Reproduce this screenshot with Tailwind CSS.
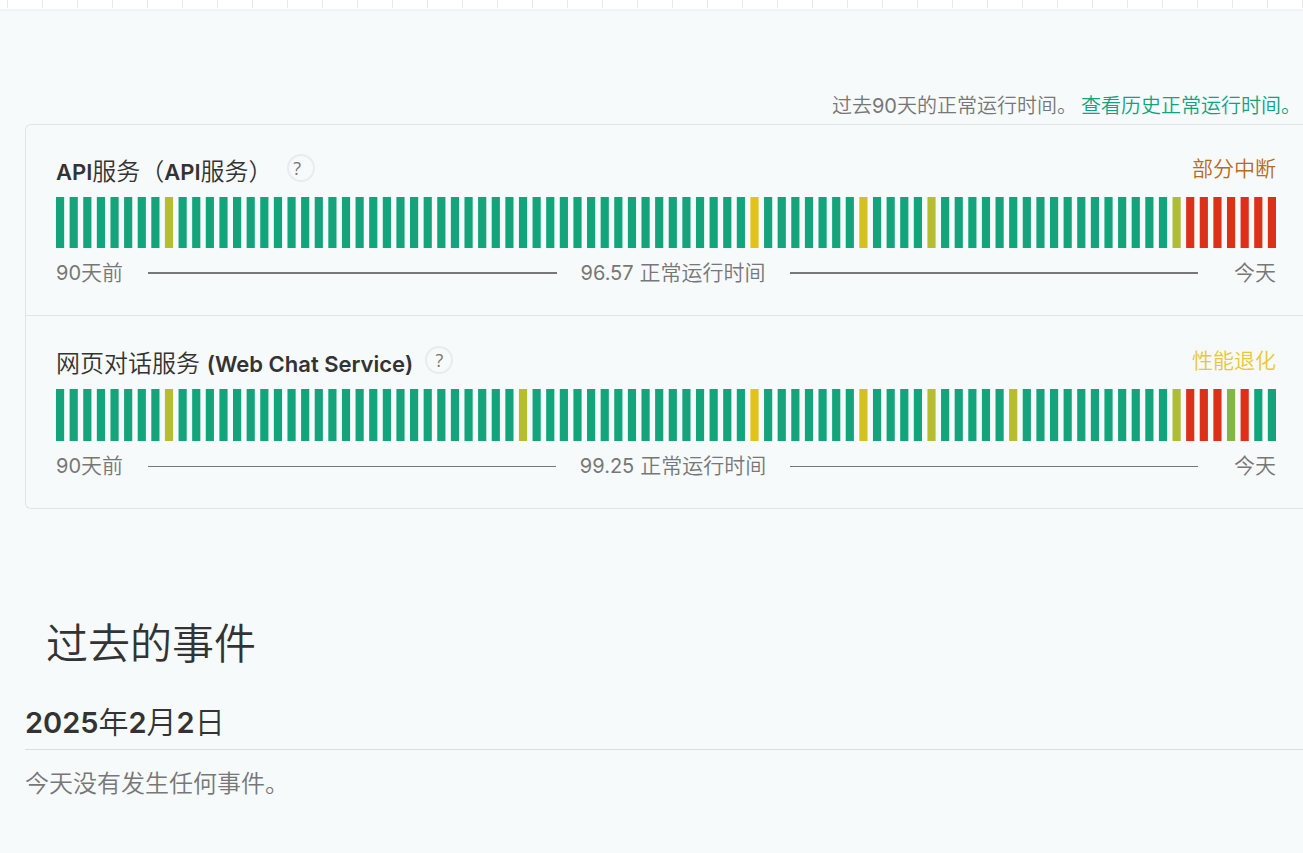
<!DOCTYPE html>
<html lang="zh-CN">
<head>
<meta charset="utf-8">
<meta name="viewport" content="width=device-width, initial-scale=1">
<title>服务状态</title>
<script src="https://cdn.jsdelivr.net/npm/@tailwindcss/browser@4"></script>
</head>
<body class="min-h-screen overflow-x-hidden bg-[#f6fafb] pb-12 font-['Inter','Noto_Sans_CJK_SC',sans-serif] text-[#333]">
<div class="h-[11px] border-b-2 border-[#f1f4f4] bg-white pl-[7px]" aria-hidden="true">
  <div class="h-2 bg-[repeating-linear-gradient(to_right,#e8e8e8_0_1px,transparent_1px_35px)]"></div>
</div>
<main class="pl-[25px] pt-[80px]">
  <p class="flex justify-end gap-1 pr-[2px] text-[20px] leading-[30px] font-[350] whitespace-nowrap text-[#777]">
    <span>过去<span class="font-normal">90</span>天的正常运行时间。</span><a href="#history" class="text-[#10a37f]">查看历史正常运行时间。</a>
  </p>
  <div class="mt-[3px] rounded-l-md border border-r-0 border-[#e0e5e6]">
    <section class="h-[191px] border-b border-[#e0e5e6] pl-[30px] pr-[27px] pt-[26px]">
      <div class="flex h-[46px] items-start justify-between">
        <div class="flex items-start gap-[14px]">
          <h3 class="pt-[3px] text-[24px] leading-[36px] font-[350]"><span class="text-[22px] font-semibold">API</span>服务（<span class="text-[22px] font-semibold">API</span>服务）</h3>
          <button type="button" aria-label="API服务说明" class="mt-[3px] flex size-7 items-center justify-center rounded-full border-2 border-[#e8ecec] pr-[7px] font-['Open_Sans',sans-serif] text-[18px] leading-6 text-[#777]">?</button>
        </div>
        <span class="text-[21px] leading-[36px] font-[350] text-[#b96b1c]">部分中断</span>
      </div>
      <svg data-days="8:#b7bd30,51:#e2c21b,59:#d3c023,64:#b7bd30,82:#afbd30,83:#dc3018,84:#dc3018,85:#dc3018,86:#dc3018,87:#dc3018,88:#dc3018,89:#dc3018" class="block h-[51px] w-full" viewBox="0 0 448 34" preserveAspectRatio="none" role="img" aria-label="API服务90天运行状态"></svg>
      <div class="flex items-center pt-[7px] text-[21px] leading-[36px] font-[350] text-[#777]">
        <span class="w-[68px] whitespace-nowrap"><span class="text-[20px] font-normal">90</span>天前</span>
        <span class="mx-6 h-[2px] flex-1 bg-[#777]"></span>
        <span class="whitespace-nowrap"><span class="text-[20px] font-normal">96.57</span> 正常运行时间</span>
        <span class="ml-6 mr-9 h-[2px] flex-1 bg-[#777]"></span>
        <span>今天</span>
      </div>
    </section>
    <section class="h-[192px] pl-[30px] pr-[27px] pt-[27px]">
      <div class="flex h-[46px] items-start justify-between">
        <div class="flex items-start gap-3">
          <h3 class="pt-[3px] text-[24px] leading-[36px] font-[350]">网页对话服务 <span class="text-[22px] font-semibold">(Web Chat Service)</span></h3>
          <button type="button" aria-label="网页对话服务说明" class="mt-[3px] flex size-7 items-center justify-center rounded-full border-2 border-[#e8ecec] font-['Open_Sans',sans-serif] text-[18px] leading-6 text-[#777]">?</button>
        </div>
        <span class="text-[21px] leading-[36px] font-[350] text-[#edc730]">性能退化</span>
      </div>
      <svg data-days="8:#b7bd30,34:#b7bd30,51:#e2c21b,59:#d3c023,64:#b7bd30,70:#b7bd30,82:#afbd30,83:#dc3018,84:#dc3018,85:#dc3018,86:#84b548,87:#dc3018" class="block h-[52px] w-full" viewBox="0 0 448 34" preserveAspectRatio="none" role="img" aria-label="网页对话服务90天运行状态"></svg>
      <div class="flex items-center pt-[7px] text-[21px] leading-[36px] font-[350] text-[#777]">
        <span class="w-[68px] whitespace-nowrap"><span class="text-[20px] font-normal">90</span>天前</span>
        <span class="mx-6 h-px flex-1 bg-[#777]"></span>
        <span class="whitespace-nowrap"><span class="text-[20px] font-normal">99.25</span> 正常运行时间</span>
        <span class="ml-6 mr-9 h-px flex-1 bg-[#777]"></span>
        <span>今天</span>
      </div>
    </section>
  </div>
  <h2 class="mt-[103px] pl-[21px] text-[42px] leading-[64px] font-[350]">过去的事件</h2>
  <section class="mt-[23px]">
    <h3 class="border-b border-[#d8dee0] pb-[3px] text-[30px] leading-[46px] font-[350]"><span class="text-[29px] font-semibold">2025</span>年<span class="text-[29px] font-semibold">2</span>月<span class="text-[29px] font-semibold">2</span>日</h3>
    <p class="mt-4 text-[24px] leading-[36px] font-[350] text-[#777]">今天没有发生任何事件。</p>
  </section>
</main>
<script>
  // One bar per day; days not listed were fully operational.
  document.querySelectorAll('svg[data-days]').forEach(svg => {
    const days = Object.fromEntries(svg.dataset.days.split(',').map(d => d.split(':')));
    for (let i = 0; i < 90; i++) {
      const bar = document.createElementNS('http://www.w3.org/2000/svg', 'rect');
      bar.setAttribute('x', i * 5);
      bar.setAttribute('width', 3);
      bar.setAttribute('height', 34);
      bar.setAttribute('fill', days[i] || '#13a47c');
      svg.appendChild(bar);
    }
  });
</script>
</body>
</html>
